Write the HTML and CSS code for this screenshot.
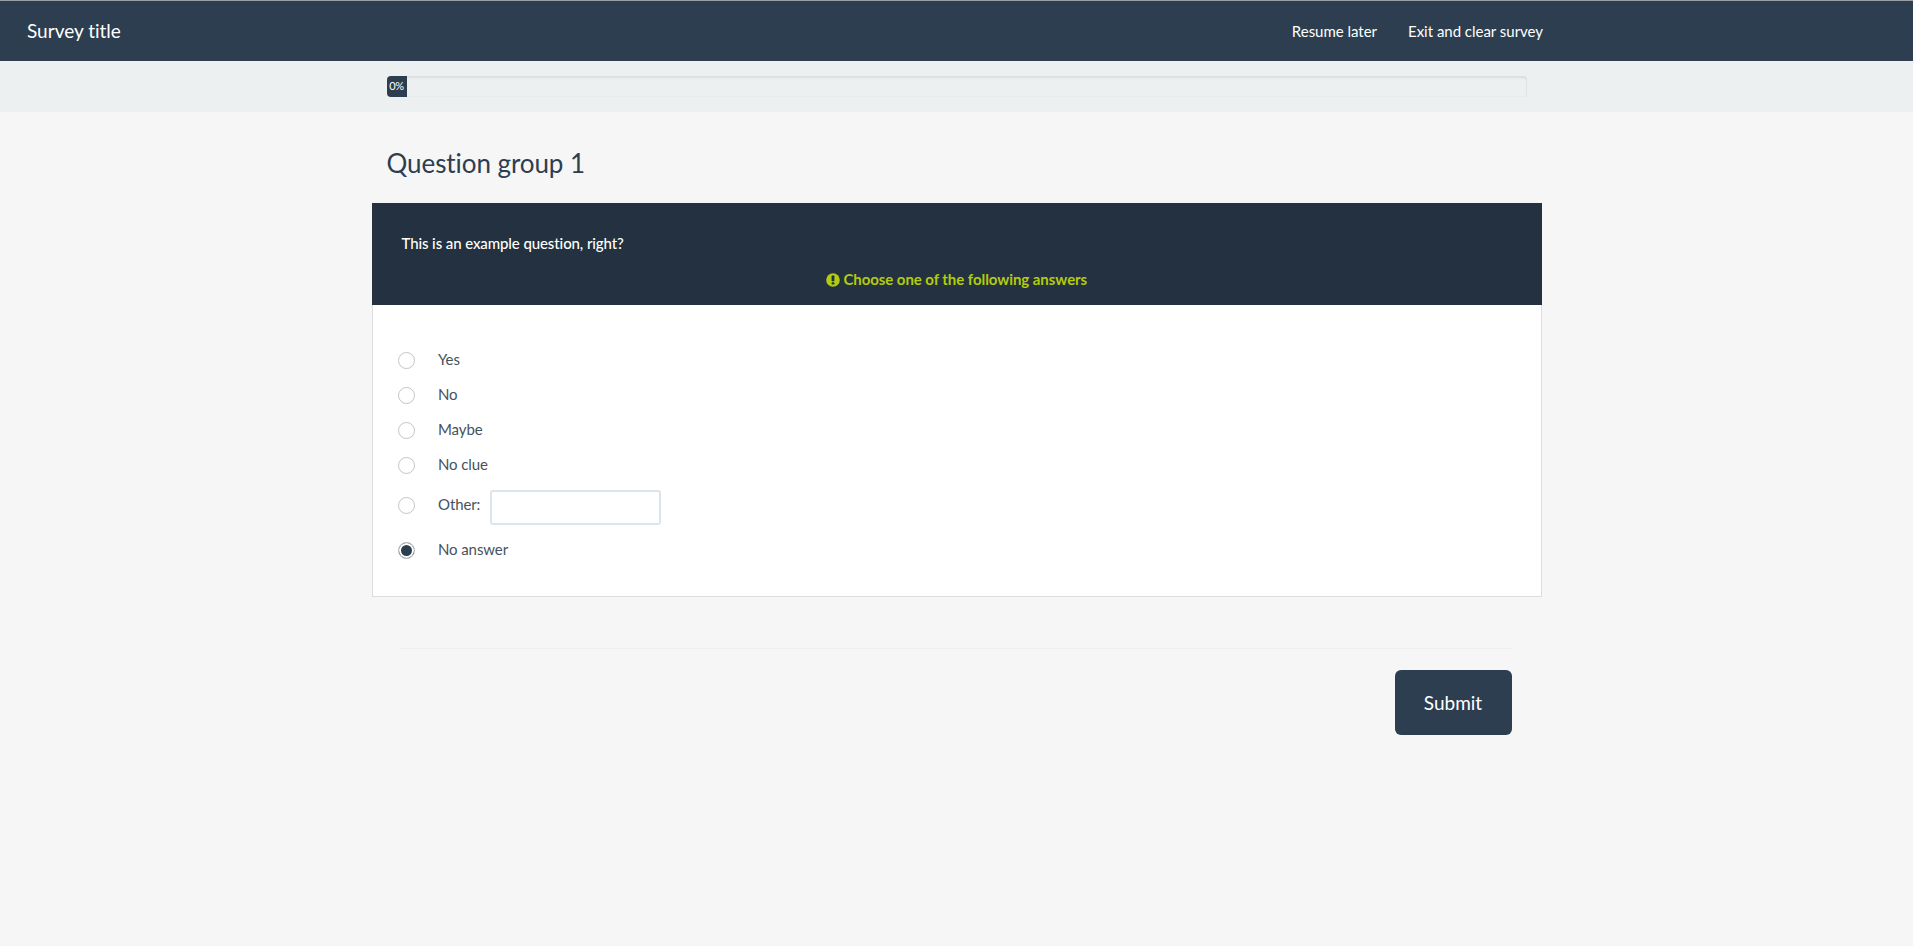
FILE: index.html
```html
<!DOCTYPE html>
<html lang="en">
<head>
<meta charset="utf-8">
<title>Survey title</title>
<link rel="stylesheet" href="styles.css">
</head>
<body>
<nav class="navbar">
  <a class="brand" href="#">Survey title</a>
  <div class="nav-links">
    <a href="#">Resume later</a>
    <a href="#">Exit and clear survey</a>
  </div>
</nav>
<div class="progress-band">
  <div class="progress"><div class="progress-bar">0%</div></div>
</div>
<main class="container">
  <h2 class="group-title">Question group 1</h2>
  <section class="card">
    <header class="card-head">
      <p class="question">This is an example question, right?</p>
      <p class="hint">
        <svg class="hint-icon" viewBox="0 0 14 14" aria-hidden="true"><circle cx="7" cy="7" r="6.8" fill="#b3cc0d"/><rect x="5.6" y="2.6" width="2.8" height="5.6" rx=".6" fill="#233140"/><rect x="5.6" y="9.2" width="2.8" height="2.4" rx=".5" fill="#233140"/></svg>
        Choose one of the following answers
      </p>
    </header>
    <div class="card-body">
      <label class="row"><span class="radio"></span><span class="row-text">Yes</span></label>
      <label class="row"><span class="radio"></span><span class="row-text">No</span></label>
      <label class="row"><span class="radio"></span><span class="row-text">Maybe</span></label>
      <label class="row"><span class="radio"></span><span class="row-text">No clue</span></label>
      <label class="row row-other"><span class="radio"></span><span class="row-text">Other:</span><input class="other-input" type="text"></label>
      <label class="row"><span class="radio radio-checked"></span><span class="row-text">No answer</span></label>
    </div>
  </section>
  <div class="actions">
    <hr class="divider">
    <button class="submit" type="button">Submit</button>
  </div>
</main>
</body>
</html>
```

FILE: styles.css
```css
* { box-sizing: border-box; }
html, body { height: 100%; }
body {
  margin: 0;
  background: #f6f6f6;
  color: #2c3e50;
  font: 15px/1.43 Lato, "Open Sans", sans-serif;
  font-variant-ligatures: none;
  overflow: hidden;
}
a { color: inherit; text-decoration: none; }
p { margin: 0; }

.navbar {
  height: 61px;
  background: #2c3e50;
  border-top: 1px solid #9a9fa5;
  color: #fff;
  display: flex;
  align-items: center;
  justify-content: space-between;
  padding: 0 370px 0 27px;
}
.brand { font-size: 19px; }
.nav-links { display: flex; gap: 31px; padding-top: 1px; letter-spacing: -.02px; }

.progress-band {
  height: 51px;
  background: #ecf0f1;
  padding-top: 15px;
}
.progress {
  width: 1140px;
  height: 21px;
  margin: 0 auto;
  border-radius: 4px;
  background: #edf0f1;
  box-shadow: inset 0 2px 2px rgba(0, 0, 0, .08), inset 0 -1px 1px rgba(0, 0, 0, .02), inset -1px 0 1px rgba(0, 0, 0, .03);
  overflow: hidden;
}
.progress-bar {
  width: 20px;
  height: 100%;
  background: #2c3e50;
  color: #fff;
  font-size: 11px;
  letter-spacing: -.4px;
  line-height: 19px;
  text-align: center;
}

.container { width: 1170px; margin: 0 auto; }
.group-title {
  margin: 0;
  padding: 34px 15px 0;
  height: 91px;
  font-size: 26px;
  font-weight: 400;
  line-height: 34px;
  letter-spacing: -.07px;
}

.card {
  background: #fff;
  border: 1px solid #ddd;
  border-top: 0;
}
.card-head {
  height: 102px;
  margin: 0 -1px;
  background: #233140;
  color: #fff;
  padding-top: 29px;
}
.question { padding-left: 30px; line-height: 22px; font-weight: 500; letter-spacing: -.1px; }
.hint {
  margin-top: 14px;
  text-align: center;
  line-height: 22px;
  color: #b3cc0d;
  font-weight: 700;
  letter-spacing: -.06px;
}
.hint-icon { width: 14px; height: 14px; vertical-align: -2px; }

.card-body { padding: 38px 25px 28px; }
.row {
  height: 35px;
  display: flex;
  align-items: center;
  color: #44525f;
  letter-spacing: -.1px;
}
.row-text { position: relative; top: -1px; }
.row-other { height: 45px; margin-bottom: 5px; }
.radio {
  width: 17px;
  height: 17px;
  flex: none;
  margin-right: 23.5px;
  border: 1px solid #c4c4c4;
  border-radius: 50%;
  background: #fff;
}
.radio-checked { background: #2c3e50; box-shadow: inset 0 0 0 2px #fff; }
.other-input {
  width: 171px;
  height: 35px;
  margin: 4px 0 0 10px;
  border: 2px solid #dce4ec;
  border-radius: 3px;
  background: #fff;
}

.actions {
  padding: 51px 30px 0 28px;
  display: flex;
  flex-direction: column;
  align-items: flex-end;
}
.divider {
  width: 100%;
  margin: 0 0 21px;
  border: 0;
  border-top: 1px solid #ecf0f1;
}
.submit {
  width: 117px;
  height: 65px;
  border: 0;
  border-radius: 6px;
  background: #2c3e50;
  color: #fff;
  font: 19px Lato, sans-serif;
  font-variant-ligatures: none;
}
```
